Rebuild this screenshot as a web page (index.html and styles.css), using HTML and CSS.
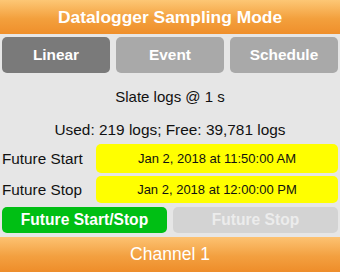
FILE: index.html
```html
<!DOCTYPE html>
<html>
<head>
<meta charset="utf-8">
<link rel="stylesheet" href="styles.css">
</head>
<body>
<div class="page">
  <div class="bar header">Datalogger Sampling Mode</div>
  <div class="modes">
    <div class="mode active">Linear</div>
    <div class="mode">Event</div>
    <div class="mode">Schedule</div>
  </div>
  <div class="info1">Slate logs @ 1 s</div>
  <div class="info2">Used: 219 logs; Free: 39,781 logs</div>
  <div class="row start">
    <div class="label">Future Start</div>
    <div class="date">Jan 2, 2018 at 11:50:00 AM</div>
  </div>
  <div class="row stop">
    <div class="label">Future Stop</div>
    <div class="date">Jan 2, 2018 at 12:00:00 PM</div>
  </div>
  <div class="actions">
    <div class="act go">Future Start/Stop</div>
    <div class="act off">Future Stop</div>
  </div>
  <div class="bar channel">Channel 1</div>
</div>
</body>
</html>
```
FILE: styles.css
```css
html, body {
  margin: 0;
  padding: 0;
}
body {
  background: #e6e6e6;
  font-family: "Liberation Sans", Arial, sans-serif;
  color: #111;
}
.page {
  width: 340px;
  height: 272px;
  display: flex;
  flex-direction: column;
  overflow: hidden;
}
.bar {
  display: flex;
  align-items: center;
  justify-content: center;
  color: #fff;
}
.header {
  height: 34px;
  flex: none;
  font-size: 17.4px;
  font-weight: bold;
  background: linear-gradient(#fdc775, #f3a03d 55%, #ef8f2b);
}
.modes {
  display: flex;
  gap: 6px;
  padding: 0 2px;
  margin-top: 3px;
  height: 36px;
  flex: none;
}
.mode {
  flex: 1;
  display: flex;
  align-items: center;
  justify-content: center;
  border-radius: 5px;
  background: #a9a9a9;
  color: #fff;
  font-weight: bold;
  font-size: 15.4px;
}
.mode.active {
  background: #7a7a7a;
}
.info1 {
  height: 46px;
  flex: none;
  display: flex;
  align-items: center;
  justify-content: center;
  font-size: 15px;
}
.info2 {
  height: 22px;
  flex: none;
  display: flex;
  align-items: center;
  justify-content: center;
  font-size: 15.4px;
}
.row {
  display: flex;
  padding: 0 2px 0 2px;
  flex: none;
}
.row.start {
  margin-top: 3px;
  height: 29px;
}
.row.stop {
  margin-top: 3px;
  height: 27px;
}
.label {
  width: 94px;
  flex: none;
  display: flex;
  align-items: center;
  font-size: 15.3px;
}
.date {
  flex: 1;
  background: #ffff00;
  border-radius: 5px;
  display: flex;
  align-items: center;
  justify-content: center;
  font-size: 13px;
}
.actions {
  display: flex;
  gap: 6px;
  padding: 0 2px;
  margin-top: 4px;
  height: 26px;
  flex: none;
}
.act {
  flex: 1;
  border-radius: 5px;
  display: flex;
  align-items: center;
  justify-content: center;
  font-weight: bold;
  font-size: 15.6px;
  color: #fff;
}
.act.go {
  background: #00bf14;
}
.act.off {
  background: #d3d3d3;
  color: #ececec;
}
.channel {
  margin-top: 4px;
  flex: 1;
  font-size: 17.5px;
  background: linear-gradient(#fcc272, #f3a040 55%, #ee8d2a);
}
```
